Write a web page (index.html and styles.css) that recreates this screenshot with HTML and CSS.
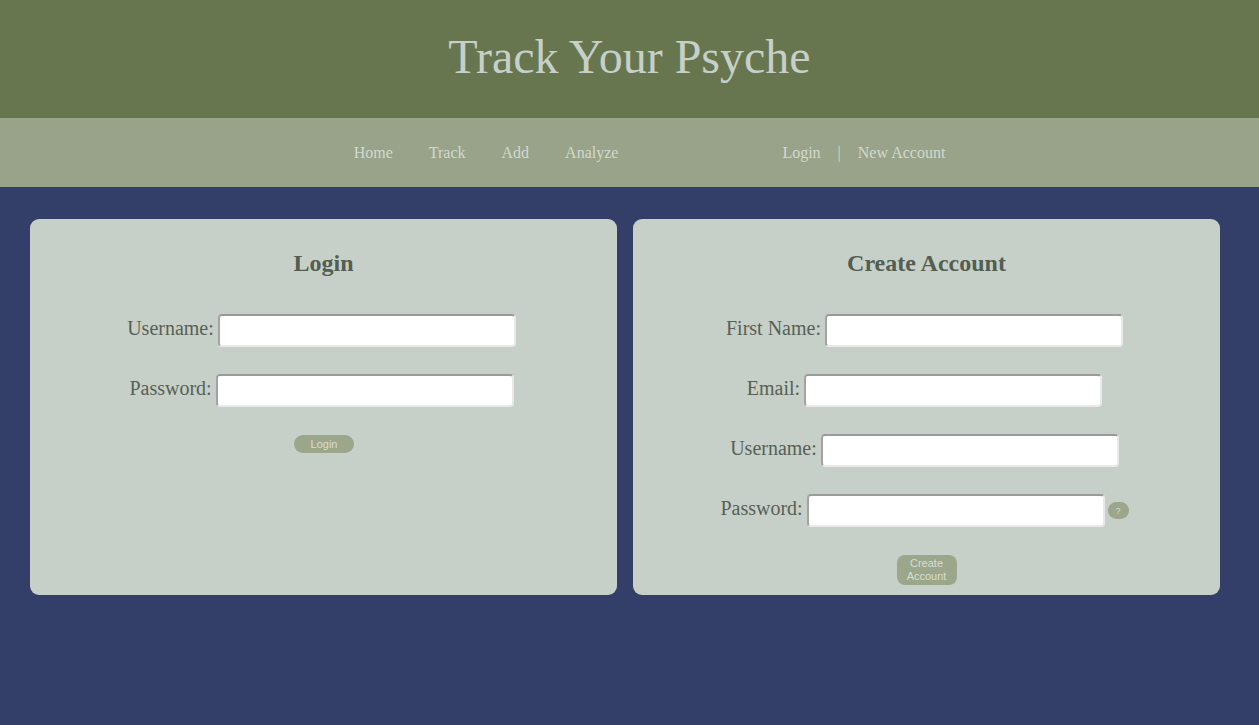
FILE: index.html
```html
<!DOCTYPE html>
<html lang="en">
<head>
<meta charset="utf-8">
<title>Track Your Psyche</title>
<link rel="stylesheet" href="styles.css">
</head>
<body>
<header class="site-header">
  <h1 class="site-title">Track Your Psyche</h1>
</header>
<nav class="site-nav">
  <ul class="nav-main">
    <li><a href="#">Home</a></li>
    <li><a href="#">Track</a></li>
    <li><a href="#">Add</a></li>
    <li><a href="#">Analyze</a></li>
  </ul>
  <ul class="nav-account">
    <li><a href="#">Login</a></li>
    <li class="nav-sep">|</li>
    <li><a href="#">New Account</a></li>
  </ul>
</nav>
<main class="content">
  <section class="card">
    <h2 class="card-title">Login</h2>
    <form class="form">
      <div class="row"><label class="label">Username:</label><input class="field" type="text"></div>
      <div class="row"><label class="label">Password:</label><input class="field" type="password"></div>
      <button class="btn btn-pill" type="button">Login</button>
    </form>
  </section>
  <section class="card">
    <h2 class="card-title">Create Account</h2>
    <form class="form">
      <div class="row"><label class="label">First Name:</label><input class="field" type="text"></div>
      <div class="row"><label class="label">Email:</label><input class="field" type="email"></div>
      <div class="row"><label class="label">Username:</label><input class="field" type="text"></div>
      <div class="row"><label class="label">Password:</label><input class="field" type="password"><button class="help" type="button">?</button></div>
      <button class="btn btn-box" type="button">Create Account</button>
    </form>
  </section>
</main>
</body>
</html>
```

FILE: styles.css
```css
* { box-sizing: border-box; }
html, body { margin: 0; padding: 0; height: 100%; }
body {
  background: #333f69;
  font-family: "Liberation Serif", "Times New Roman", serif;
  display: flex;
  flex-direction: column;
}
.site-header {
  background: #68764f;
  height: 118px;
  padding-top: 29px;
}
.site-title {
  margin: 0;
  text-align: center;
  font-weight: normal;
  font-size: 48px;
  line-height: 55px;
  color: #c6d0c8;
}
.site-nav {
  background: #98a389;
  height: 69px;
  display: flex;
  align-items: center;
  justify-content: center;
  padding-left: 40px;
  padding-top: 1px;
  gap: 164px;
}
.site-nav ul {
  list-style: none;
  margin: 0;
  padding: 0;
  display: flex;
  align-items: center;
}
.nav-main { gap: 36px; }
.nav-account { gap: 17px; }
.site-nav a, .nav-sep {
  color: #d3d9cf;
  text-decoration: none;
  font-size: 16px;
  line-height: 18px;
}
.content {
  display: grid;
  grid-template-columns: 587px 587px;
  gap: 16px;
  padding: 32px 0 0 30px;
  align-items: stretch;
  align-content: start;
}
.card {
  background: #c6d0c8;
  border-radius: 9px;
  padding: 30px 0 10px;
}
.card-title {
  margin: 0;
  text-align: center;
  font-size: 24px;
  line-height: 28px;
  font-weight: bold;
  color: #545d52;
}
.form {
  margin-top: 37px;
  display: flex;
  flex-direction: column;
  align-items: center;
  gap: 27px;
}
.row {
  display: flex;
  align-items: center;
  gap: 4px;
  margin-right: 4px;
}
.label {
  font-size: 20px;
  line-height: 23px;
  padding-bottom: 5px;
  color: #586056;
}
.field {
  width: 298px;
  height: 33px;
  background: #fff;
  border: 2px solid;
  border-color: #9a9a9a #e9e9e9 #e9e9e9 #a3a3a3;
  border-radius: 4px;
  margin: 0;
}
.help {
  width: 21px;
  height: 17px;
  margin-left: -1px;
  border: none;
  border-radius: 9px;
  background: #9ba68a;
  color: #d5dbcf;
  font-family: "Liberation Sans", Arial, sans-serif;
  font-size: 9px;
  padding: 0;
}
.btn {
  border: none;
  background: #9ba68a;
  color: #d8ddd3;
  font-family: "Liberation Sans", Arial, sans-serif;
  font-size: 11px;
  line-height: 13px;
  padding: 0;
  width: 60px;
}
.btn-pill {
  height: 18px;
  border-radius: 9px;
  margin-left: 1px;
  margin-top: 1px;
}
.btn-box {
  height: 30px;
  border-radius: 8px;
  margin-top: 1px;
}
```
